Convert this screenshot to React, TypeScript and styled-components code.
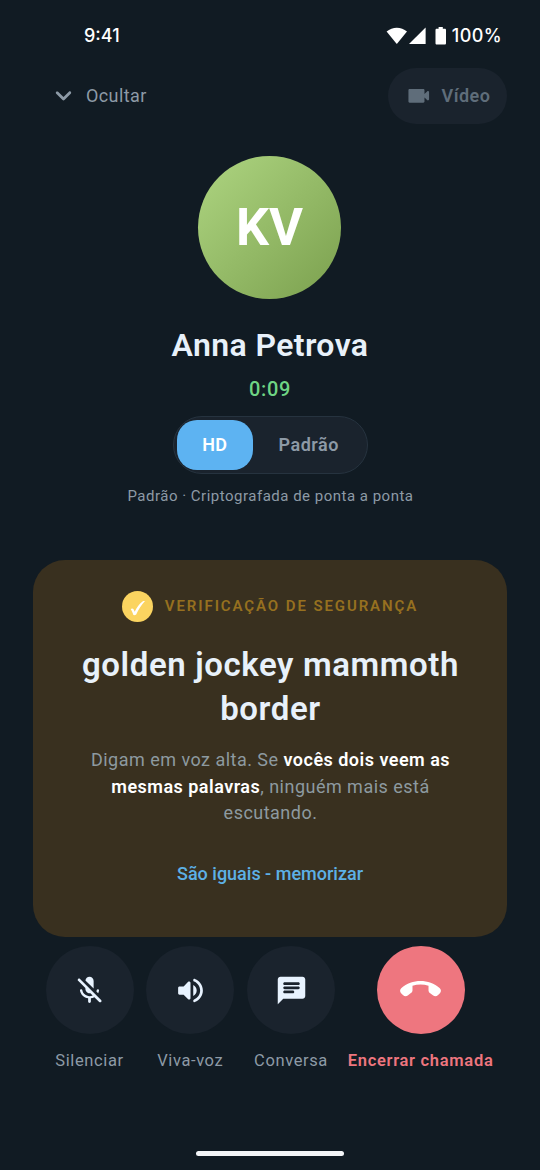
import React from "react";
import styled, { createGlobalStyle } from "styled-components";

const GlobalStyle = createGlobalStyle`
  *, *::before, *::after { box-sizing: border-box; }
  html, body { margin: 0; padding: 0; background: #111b23; }
  body { font-family: Roboto, "Noto Sans", sans-serif; color: #e8f1fa; }
  button { font: inherit; color: inherit; background: none; border: 0; padding: 0; margin: 0; }
`;

const Screen = styled.main`
  width: 540px;
  height: 1170px;
  display: flex;
  flex-direction: column;
  align-items: center;
  background: #111b23;
  overflow: hidden;
  white-space: nowrap;
`;

const StatusBar = styled.div`
  width: 100%;
  height: 68px;
  padding: 3px 38px 0 84px;
  display: flex;
  align-items: center;
  justify-content: space-between;
  color: #fff;
  font-family: Inter, Roboto, sans-serif;
  font-size: 18px;
  font-weight: 500;
`;

const Clock = styled.span`
  letter-spacing: 0;
`;

const StatusIcons = styled.div`
  display: flex;
  align-items: center;
  letter-spacing: 0.4px;
`;

const StatusGlyphs = styled.svg`
  margin-right: 5.2px;
`;

const Header = styled.header`
  width: 100%;
  height: 55.5px;
  padding: 0 33px 0 47px;
  display: flex;
  align-items: center;
  justify-content: space-between;
`;

const HideButton = styled.button`
  display: flex;
  align-items: center;
  gap: 6px;
  color: #8d9aa6;
  font-size: 18px;
  line-height: 21px;
  letter-spacing: 0.4px;
`;

const VideoButton = styled.button`
  height: 55.5px;
  padding: 0 16.5px;
  display: flex;
  align-items: center;
  gap: 9px;
  border-radius: 28px;
  background: #1a232d;
  color: #5f6d7a;
  font-size: 18px;
  font-weight: 600;
  line-height: 20px;
  letter-spacing: 0.5px;
`;

const Avatar = styled.div`
  width: 143px;
  height: 143px;
  margin: 32px 1px 0 0;
  flex: none;
  display: flex;
  align-items: center;
  justify-content: center;
  border-radius: 50%;
  background: linear-gradient(135deg, #aed581 0%, #7ba04e 100%);
  color: #fff;
  font-size: 52px;
  font-weight: 700;
`;

const Name = styled.h1`
  margin: 26.5px 0 0;
  font-size: 32px;
  font-weight: 600;
  line-height: 40px;
  letter-spacing: 0.4px;
`;

const Timer = styled.div`
  margin-top: 10.5px;
  color: #6fd584;
  font-size: 20px;
  font-weight: 500;
  line-height: 26px;
  letter-spacing: 0.6px;
`;

const Segmented = styled.div`
  height: 58px;
  margin: 14.5px 0 0 1px;
  padding: 3px;
  display: flex;
  border: 1px solid #26333f;
  border-radius: 29px;
  background: #1a232d;
`;

const Segment = styled.button<{ $active?: boolean }>`
  padding: 0 25.5px 2px;
  border-radius: 20px;
  background: ${(p) => (p.$active ? "#5db3f2" : "transparent")};
  color: ${(p) => (p.$active ? "#fff" : "#8d9aa6")};
  font-size: 18px;
  font-weight: 600;
  letter-spacing: 0.5px;
`;

const Caption = styled.p`
  margin: 12px 0 0 1px;
  color: #8d9aa6;
  font-size: 15px;
  line-height: 20px;
  letter-spacing: 0.5px;
`;

const Card = styled.section`
  width: 474px;
  height: 377.5px;
  margin-top: 53.5px;
  padding: 31.5px 33px 0;
  flex: none;
  display: flex;
  flex-direction: column;
  align-items: center;
  border-radius: 32px;
  background: #39301f;
  text-align: center;
`;

const CardHeading = styled.div`
  display: flex;
  align-items: center;
  gap: 12px;
  color: #96701f;
  font-size: 15px;
  font-weight: 600;
  line-height: 19px;
  letter-spacing: 1.9px;
`;

const Badge = styled.span`
  width: 31px;
  height: 31px;
  display: flex;
  align-items: center;
  justify-content: center;
  border-radius: 50%;
  background: #fbd460;
`;

const Phrase = styled.h2`
  margin: 21px 0 0 1px;
  font-size: 33px;
  font-weight: 600;
  line-height: 44px;
  letter-spacing: 0.6px;
`;

const Hint = styled.p`
  margin: 16px 0 0 1px;
  color: #8d9aa0;
  font-size: 18px;
  line-height: 26.5px;
  letter-spacing: 0.48px;
`;

const Strong = styled.strong`
  color: #fff;
  font-weight: 600;
`;

const ConfirmLink = styled.button`
  margin-top: 35px;
  color: #5db0e6;
  font-size: 18px;
  font-weight: 500;
  line-height: 24px;
`;

const Actions = styled.nav`
  margin: 9px 1px 0 0;
  display: flex;
  justify-content: center;
  gap: 12.75px;
`;

const Action = styled.div<{ $danger?: boolean }>`
  display: flex;
  flex-direction: column;
  align-items: center;
  gap: 16.5px;
  color: ${(p) => (p.$danger ? "#ee767f" : "#8d9aa6")};
  font-size: 16.5px;
  font-weight: ${(p) => (p.$danger ? 600 : 400)};
  line-height: 20px;
  letter-spacing: ${(p) => (p.$danger ? "0.7px" : "0.6px")};
`;

const RoundButton = styled.button<{ $danger?: boolean }>`
  width: 88px;
  height: 88px;
  display: flex;
  align-items: center;
  justify-content: center;
  border-radius: 50%;
  background: ${(p) => (p.$danger ? "#ee767f" : "#1a232d")};
  color: ${(p) => (p.$danger ? "#fff" : "#e8f3ff")};
`;

const HomeIndicator = styled.div`
  width: 148px;
  height: 5px;
  margin-top: auto;
  margin-bottom: 14px;
  border-radius: 3px;
  background: #f3f5f7;
`;

const icons = {
  chevron:
    "M8.12 9.29L12 13.17l3.88-3.88c.39-.39 1.02-.39 1.41 0 .39.39.39 1.02 0 1.41l-4.59 4.59c-.39.39-1.02.39-1.41 0L6.7 10.7c-.39-.39-.39-1.02 0-1.41.39-.38 1.03-.39 1.42 0z",
  video:
    "M17 10.5V7c0-.55-.45-1-1-1H4c-.55 0-1 .45-1 1v10c0 .55.45 1 1 1h12c.55 0 1-.45 1-1v-3.5l2.29 2.29c.63.63 1.71.18 1.71-.71V8.91c0-.89-1.08-1.34-1.71-.71L17 10.5z",
  micOff:
    "M15 10.6V5c0-1.66-1.34-3-3-3-1.54 0-2.79 1.16-2.96 2.65L15 10.6zm3.08.4c-.41 0-.77.3-.83.71-.05.32-.12.64-.22.93l1.27 1.27c.3-.6.52-1.25.63-1.94.07-.51-.33-.97-.85-.97zM3.71 3.56c-.39.39-.39 1.02 0 1.41L9 10.27v.43c0 1.19.6 2.32 1.63 2.91.75.43 1.41.44 2.02.31l1.66 1.66c-.71.33-1.5.52-2.31.52-2.54 0-4.88-1.77-5.25-4.39-.06-.41-.42-.71-.83-.71-.52 0-.92.46-.85.97.46 2.97 2.96 5.3 5.93 5.75V20c0 .55.45 1 1 1s1-.45 1-1v-2.28c.91-.13 1.77-.45 2.55-.9l3.49 3.49c.39.39 1.02.39 1.41 0 .39-.39.39-1.02 0-1.41L5.12 3.56c-.39-.39-1.02-.39-1.41 0z",
  speaker:
    "M3 10v4c0 .55.45 1 1 1h3l3.29 3.29c.63.63 1.71.18 1.71-.71V6.41c0-.89-1.08-1.34-1.71-.71L7 9H4c-.55 0-1 .45-1 1zm13.5 2c0-1.77-1.02-3.29-2.5-4.03v8.05c1.48-.73 2.5-2.25 2.5-4.02zM14 4.45v.2c0 .38.25.71.6.85C17.18 6.53 19 9.06 19 12s-1.82 5.47-4.4 6.5c-.36.14-.6.47-.6.85v.2c0 .63.63 1.07 1.21.85C18.6 19.11 21 15.84 21 12s-2.4-7.11-5.79-8.4c-.58-.23-1.21.22-1.21.85z",
  chat:
    "M20 2H4c-1.1 0-1.99.9-1.99 2L2 22l4-4h14c1.1 0 2-.9 2-2V4c0-1.1-.9-2-2-2zM7 9h10c.55 0 1 .45 1 1s-.45 1-1 1H7c-.55 0-1-.45-1-1s.45-1 1-1zm6 5H7c-.55 0-1-.45-1-1s.45-1 1-1h6c.55 0 1 .45 1 1s-.45 1-1 1zm4-6H7c-.55 0-1-.45-1-1s.45-1 1-1h10c.55 0 1 .45 1 1s-.45 1-1 1z",
  hangUp:
    "M4.51 15.48l2-1.59c.48-.38.76-.96.76-1.57v-2.6c3.02-.98 6.29-.99 9.32 0v2.61c0 .61.28 1.19.76 1.57l1.99 1.58c.8.63 1.94.57 2.66-.15l1.22-1.22c.8-.8.8-2.13-.05-2.88-6.41-5.66-16.07-5.66-22.48 0-.85.75-.85 2.08-.05 2.88l1.22 1.22c.71.72 1.85.78 2.65.15z",
};

function Icon({ name, size }: { name: keyof typeof icons; size: number }) {
  return (
    <svg width={size} height={size} viewBox="0 0 24 24" fill="currentColor" aria-hidden="true">
      <path d={icons[name]} />
    </svg>
  );
}

const actions: { icon: keyof typeof icons; label: string; danger?: boolean }[] = [
  { icon: "micOff", label: "Silenciar" },
  { icon: "speaker", label: "Viva-voz" },
  { icon: "chat", label: "Conversa" },
  { icon: "hangUp", label: "Encerrar chamada", danger: true },
];

export default function App() {
  return (
    <>
      <GlobalStyle />
      <Screen>
        <StatusBar>
          <Clock>9:41</Clock>
          <StatusIcons>
            <StatusGlyphs width="61" height="18" viewBox="0 0 61 18" fill="#fff" aria-hidden="true">
              <path d="M0.6 4.6C6.5-.5 15.2-.5 21 4.6L10.8 17z" />
              <path d="M39.6 0.6V17H23z" />
              <path d="M52.6 0h4.2v1.8h1.9c.8 0 1.3.5 1.3 1.3v13.1c0 .8-.5 1.3-1.3 1.3h-7.9c-.8 0-1.3-.5-1.3-1.3V3.1c0-.8.5-1.3 1.3-1.3h1.8z" />
            </StatusGlyphs>
            <span>100%</span>
          </StatusIcons>
        </StatusBar>
        <Header>
          <HideButton>
            <Icon name="chevron" size={33} />
            Ocultar
          </HideButton>
          <VideoButton>
            <Icon name="video" size={27.5} />
            Vídeo
          </VideoButton>
        </Header>
        <Avatar>KV</Avatar>
        <Name>Anna Petrova</Name>
        <Timer>0:09</Timer>
        <Segmented>
          <Segment $active>HD</Segment>
          <Segment>Padrão</Segment>
        </Segmented>
        <Caption>Padrão · Criptografada de ponta a ponta</Caption>
        <Card>
          <CardHeading>
            <Badge>
              <svg width="17" height="18" viewBox="0 0 17 18" fill="#fff" aria-hidden="true">
                <path d="M1.7 11c.9-.7 2.2-.8 2.7.1l1.3 2.6C7.6 9.7 10.3 5.9 13.5 3.4c.5-.4 1.4-.5 2.5-.5C12.5 6.6 9.5 11.2 7.2 16.4c-.7.7-1.9.9-2.8.7-.6-2.3-1.5-4.2-2.7-6.1z" />
              </svg>
            </Badge>
            VERIFICAÇÃO DE SEGURANÇA
          </CardHeading>
          <Phrase>
            golden jockey mammoth
            <br />
            border
          </Phrase>
          <Hint>
            Digam em voz alta. Se <Strong>vocês dois veem as</Strong>
            <br />
            <Strong>mesmas palavras</Strong>, ninguém mais está
            <br />
            escutando.
          </Hint>
          <ConfirmLink>São iguais - memorizar</ConfirmLink>
        </Card>
        <Actions>
          {actions.map((a) => (
            <Action key={a.label} $danger={a.danger}>
              <RoundButton $danger={a.danger} aria-label={a.label}>
                <Icon name={a.icon} size={a.danger ? 41.25 : 33} />
              </RoundButton>
              {a.label}
            </Action>
          ))}
        </Actions>
        <HomeIndicator />
      </Screen>
    </>
  );
}
